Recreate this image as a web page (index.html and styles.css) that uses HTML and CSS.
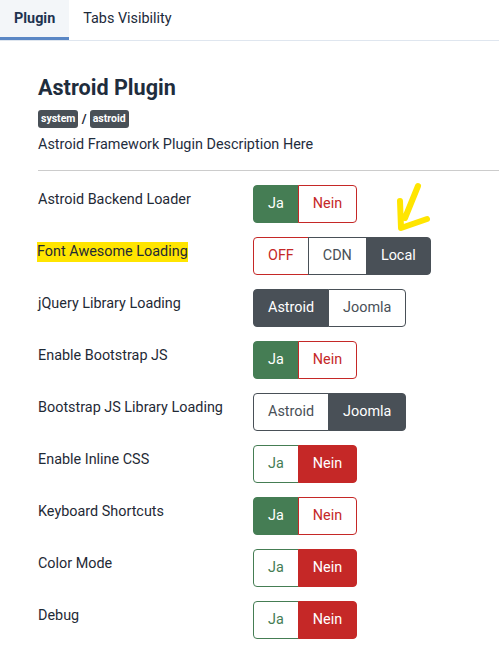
FILE: index.html
```html
<!DOCTYPE html>
<html lang="en">
<head>
  <meta charset="UTF-8">
  <title>Astroid Plugin</title>
  <meta name="viewport" content="width=device-width, initial-scale=1.0">
  <link rel="stylesheet" href="styles.css">
</head>
<body>

  <div class="tabs">
    <a class="tab active">Plugin</a>
    <a class="tab">Tabs Visibility</a>
  </div>

  <div class="content">
    <h1>Astroid Plugin</h1>
    <div class="badges">
      <span class="badge">system</span> / <span class="badge">astroid</span>
    </div>
    <p class="desc">Astroid Framework Plugin Description Here</p>
    <hr>

    <div class="row">
      <label>Astroid Backend Loader</label>
      <div class="btn-group">
        <span class="btn green on">Ja</span><span class="btn red">Nein</span>
      </div>
    </div>

    <div class="row">
      <label><span class="marker">Font Awesome Loading</span></label>
      <div class="btn-group">
        <span class="btn red">OFF</span><span class="btn dark">CDN</span><span class="btn dark on">Local</span>
      </div>
      <svg class="arrow" width="50" height="60" viewBox="0 0 50 60">
        <path d="M33 5 L20 37 M15 20 L16 47 L42 38" fill="none" stroke="#ffe500" stroke-width="6" stroke-linecap="round" stroke-linejoin="round"/>
      </svg>
    </div>

    <div class="row">
      <label>jQuery Library Loading</label>
      <div class="btn-group">
        <span class="btn dark on">Astroid</span><span class="btn dark">Joomla</span>
      </div>
    </div>

    <div class="row">
      <label>Enable Bootstrap JS</label>
      <div class="btn-group">
        <span class="btn green on">Ja</span><span class="btn red">Nein</span>
      </div>
    </div>

    <div class="row">
      <label>Bootstrap JS Library Loading</label>
      <div class="btn-group">
        <span class="btn dark">Astroid</span><span class="btn dark on">Joomla</span>
      </div>
    </div>

    <div class="row">
      <label>Enable Inline CSS</label>
      <div class="btn-group">
        <span class="btn green">Ja</span><span class="btn red on">Nein</span>
      </div>
    </div>

    <div class="row">
      <label>Keyboard Shortcuts</label>
      <div class="btn-group">
        <span class="btn green on">Ja</span><span class="btn red">Nein</span>
      </div>
    </div>

    <div class="row">
      <label>Color Mode</label>
      <div class="btn-group">
        <span class="btn green">Ja</span><span class="btn red on">Nein</span>
      </div>
    </div>

    <div class="row">
      <label>Debug</label>
      <div class="btn-group">
        <span class="btn green">Ja</span><span class="btn red on">Nein</span>
      </div>
    </div>
  </div>

</body>
</html>
```

FILE: styles.css
```css
* { box-sizing: border-box; }

body {
  margin: 0;
  background-color: #fff;
  color: #1f2a36;
  font-family: Roboto, "Liberation Sans", sans-serif;
  font-size: 14.4px;
}

.tabs {
  display: flex;
  align-items: flex-start;
  height: 41px;
  border-bottom: 1px solid #dfe6ef;
}

.tab {
  padding: 1px 14px 0;
  line-height: 36px;
  color: #1c2a3a;
  border-bottom: 3px solid transparent;
}

.tab.active {
  background-color: #f3f6f9;
  border-bottom-color: #5a87c5;
  font-weight: bold;
  color: #1e3350;
}

.content {
  padding: 33px 0 0 38px;
}

h1 {
  margin: 0;
  font-size: 21.6px;
  line-height: 28px;
  color: #1f2d3d;
}

.badges {
  margin-top: 8px;
  font-size: 13px;
  font-weight: bold;
  line-height: 18px;
}

.badge {
  display: inline-block;
  background-color: #495057;
  color: #fff;
  font-size: 10.5px;
  line-height: 18px;
  padding: 0 3px;
  border-radius: 3px;
  vertical-align: top;
}

.desc {
  margin: 7px 0 0;
  line-height: 20px;
  color: #1f2d3d;
}

hr {
  margin: 15px 0 14px;
  border: none;
  border-top: 1px solid #ccc;
}

.row {
  position: relative;
  display: flex;
  align-items: flex-start;
  height: 52px;
}

.row label {
  width: 215px;
  padding-top: 5px;
  line-height: 20px;
}

.marker {
  background-color: #ffe500;
  padding: 1px 0 2px;
  margin-left: -1px;
}

.btn-group {
  display: flex;
}

.btn {
  height: 38px;
  line-height: 36px;
  padding: 0 14px;
  border: 1px solid;
  background: #fff;
}

.btn + .btn { margin-left: -1px; }
.btn:first-child { border-radius: 4px 0 0 4px; }
.btn:last-child { border-radius: 0 4px 4px 0; }

.btn.green { border-color: #457d54; color: #457d54; }
.btn.red { border-color: #c52827; color: #c52827; }
.btn.dark { border-color: #495057; color: #495057; }

.btn.green.on { background-color: #457d54; color: #fff; }
.btn.red.on { background-color: #c52827; color: #fff; }
.btn.dark.on { background-color: #495057; color: #fff; }

.arrow {
  position: absolute;
  left: 347px;
  top: -56px;
}
```
